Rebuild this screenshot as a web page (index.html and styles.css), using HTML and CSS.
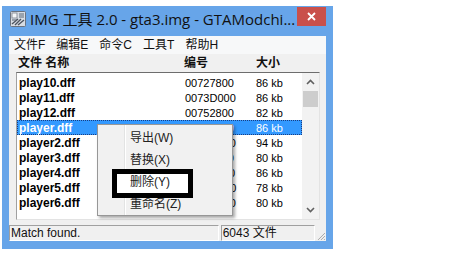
FILE: index.html
```html
<!DOCTYPE html>
<html>
<head>
<meta charset="utf-8">
<link rel="stylesheet" href="styles.css">
</head>
<body>
<div class="window">
  <div class="titlebar">
    <svg class="app-icon" width="16" height="16" viewBox="0 0 16 16">
      <rect x="0.5" y="0.5" width="15" height="15" rx="1" fill="#d8dde4" stroke="#6b7380"/>
      <rect x="2" y="2" width="5" height="5" fill="#f4f6f8" stroke="#7a828c" stroke-width="0.8"/>
      <rect x="9" y="2" width="5" height="5" fill="#9aa3ae"/>
      <path d="M2 13 L8 8 M5 14 L11 8 M8 14 L14 9" stroke="#4e5560" stroke-width="1.4"/>
      <path d="M2 9 H7" stroke="#5d6570" stroke-width="1"/>
    </svg>
    <span class="title">IMG 工具 2.0 - gta3.img - GTAModchi...</span>
    <div class="close">
      <svg width="9" height="9" viewBox="0 0 9 9"><path d="M1 1 L8 8 M8 1 L1 8" stroke="#fff" stroke-width="1.8"/></svg>
    </div>
  </div>
  <div class="client">
    <div class="menubar">
      <span>文件F</span><span>编辑E</span><span>命令C</span><span>工具T</span><span>帮助H</span>
    </div>
    <div class="header">
      <span class="h-name">文件 名称</span><span class="h-num">编号</span><span class="h-size">大小</span>
    </div>
    <div class="listbox">
      <div class="rows">
        <div class="row"><span class="c-name">play10.dff</span><span class="c-num">00727800</span><span class="c-size">86 kb</span></div>
        <div class="row"><span class="c-name">play11.dff</span><span class="c-num">0073D000</span><span class="c-size">86 kb</span></div>
        <div class="row"><span class="c-name">play12.dff</span><span class="c-num">00752800</span><span class="c-size">82 kb</span></div>
        <div class="row selected"><span class="c-name">player.dff</span><span class="c-num">00767800</span><span class="c-size">86 kb</span></div>
        <div class="row"><span class="c-name">player2.dff</span><span class="c-num">0077D000</span><span class="c-size">94 kb</span></div>
        <div class="row"><span class="c-name">player3.dff</span><span class="c-num">00795000</span><span class="c-size">80 kb</span></div>
        <div class="row"><span class="c-name">player4.dff</span><span class="c-num">007A9000</span><span class="c-size">86 kb</span></div>
        <div class="row"><span class="c-name">player5.dff</span><span class="c-num">007BE800</span><span class="c-size">78 kb</span></div>
        <div class="row"><span class="c-name">player6.dff</span><span class="c-num">007D2000</span><span class="c-size">80 kb</span></div>
      </div>
      <div class="scrollbar">
        <svg class="arrow" width="9" height="6" viewBox="0 0 9 6"><path d="M1 5 L4.5 1.5 L8 5" fill="none" stroke="#606060" stroke-width="1.6"/></svg>
        <div class="thumb"></div>
        <div class="track"></div>
        <svg class="arrow" width="9" height="6" viewBox="0 0 9 6"><path d="M1 1 L4.5 4.5 L8 1" fill="none" stroke="#606060" stroke-width="1.6"/></svg>
      </div>
    </div>
    <div class="statusbar">
      <div class="panel p1">Match found.</div>
      <div class="panel p2">6043 文件</div>
      <svg class="grip" width="10" height="10" viewBox="0 0 10 10">
        <path d="M9 2 L2 9 M9 5 L5 9 M9 8 L8 9" stroke="#a8a8a8" stroke-width="1"/>
      </svg>
    </div>
  </div>
</div>
<div class="ctxmenu">
  <div class="item">导出(W)</div>
  <div class="item">替换(X)</div>
  <div class="item marked">删除(Y)</div>
  <div class="item">重命名(Z)</div>
</div>
</body>
</html>
```
FILE: styles.css
```css
*, *::before, *::after { box-sizing: border-box; }
body {
  margin: 0;
  background: #fff;
  font-family: "Liberation Sans", "Noto Sans CJK SC", sans-serif;
  width: 468px;
  height: 270px;
  overflow: hidden;
}
.window {
  margin: 6px 0 0 2px;
  width: 331px;
  height: 243px;
  background: #67a5e9;
  display: flex;
  flex-direction: column;
}
.titlebar {
  height: 30px;
  display: flex;
  align-items: flex-start;
}
.app-icon { margin: 5px 0 0 8px; flex: none; }
.title {
  margin: 3px 0 0 4px;
  font-family: "Open Sans", "Noto Sans CJK SC", sans-serif;
  font-size: 15px;
  line-height: 20px;
  color: #111;
  white-space: nowrap;
}
.close {
  margin: 1px 7px 0 auto;
  width: 29px;
  height: 19px;
  background: #c9504b;
  display: flex;
  align-items: center;
  justify-content: center;
  flex: none;
}
.client {
  margin: 0 7px 8px 7px;
  flex: 1;
  background: #f0f0f0;
  display: flex;
  flex-direction: column;
}
.menubar {
  height: 18px;
  background: #f7f8f9;
  display: flex;
  gap: 11px;
  padding-left: 5px;
  font-size: 12px;
  line-height: 18px;
  color: #111;
}
.header {
  height: 18px;
  display: flex;
  padding-left: 9px;
  font-size: 12px;
  font-weight: bold;
  line-height: 18px;
  color: #111;
}
.h-name { width: 166px; }
.h-num { width: 72px; }
.listbox {
  height: 148px;
  margin: 0 6px 0 7px;
  background: #fff;
  border-top: 1px solid #6d6d6d;
  border-left: 1px solid #a0a0a0;
  border-bottom: 1px solid #e3e3e3;
  border-right: 1px solid #e3e3e3;
  display: flex;
}
.rows {
  flex: 1;
  padding-top: 2px;
}
.row {
  height: 15px;
  display: flex;
  align-items: center;
  padding-left: 2px;
  font-size: 11px;
  color: #000;
}
.row .c-name {
  width: 166px;
  font-size: 12px;
  font-weight: bold;
}
.row .c-num { width: 71px; }
.row.selected {
  background: #3399ff;
  color: #fff;
  outline: 1px dotted #1a3d80;
  outline-offset: -1px;
}
.scrollbar {
  width: 17px;
  display: flex;
  flex-direction: column;
  align-items: center;
  background: #f2f2f2;
}
.arrow { margin-top: 6px; flex: none; }
.scrollbar .arrow:last-child { margin: 0 0 6px 0; }
.thumb {
  margin-top: 6px;
  width: 15px;
  height: 16px;
  background: #cdcdcd;
}
.track { flex: 1; }
.statusbar {
  margin-top: 5px;
  height: 16px;
  display: flex;
  align-items: stretch;
  font-size: 12px;
  line-height: 14px;
  color: #111;
}
.panel {
  border-top: 1px solid #a0a0a0;
  border-left: 1px solid #a0a0a0;
  border-right: 1px solid #fff;
  border-bottom: 1px solid #fff;
  padding-left: 1px;
  white-space: nowrap;
}
.p1 { width: 211px; }
.p2 { width: 95px; margin-left: 2px; }
.grip { align-self: flex-end; margin-left: 1px; }
.ctxmenu {
  position: absolute;
  z-index: 1;
  left: 97px;
  top: 124px;
  width: 136px;
  height: 92px;
  padding-top: 2px;
  background: #f1f1f1;
  border: 1px solid #979797;
  box-shadow: 2px 2px 3px rgba(0, 0, 0, 0.35);
  background-image: linear-gradient(to right, transparent 26px, #e2e3e3 26px, #e2e3e3 27px, #fff 27px, #fff 28px, transparent 28px);
}
.item {
  height: 22px;
  line-height: 22px;
  padding-left: 32px;
  font-size: 12px;
  color: #222;
}
.item.marked { position: relative; }
.item.marked::before {
  content: "";
  position: absolute;
  z-index: -1;
  left: 19px;
  top: 3px;
  width: 71px;
  height: 19px;
  background: #fff;
}
.item.marked::after {
  content: "";
  position: absolute;
  left: 14px;
  top: -2px;
  width: 81px;
  height: 29px;
  border: 5px solid #000;
}
```
